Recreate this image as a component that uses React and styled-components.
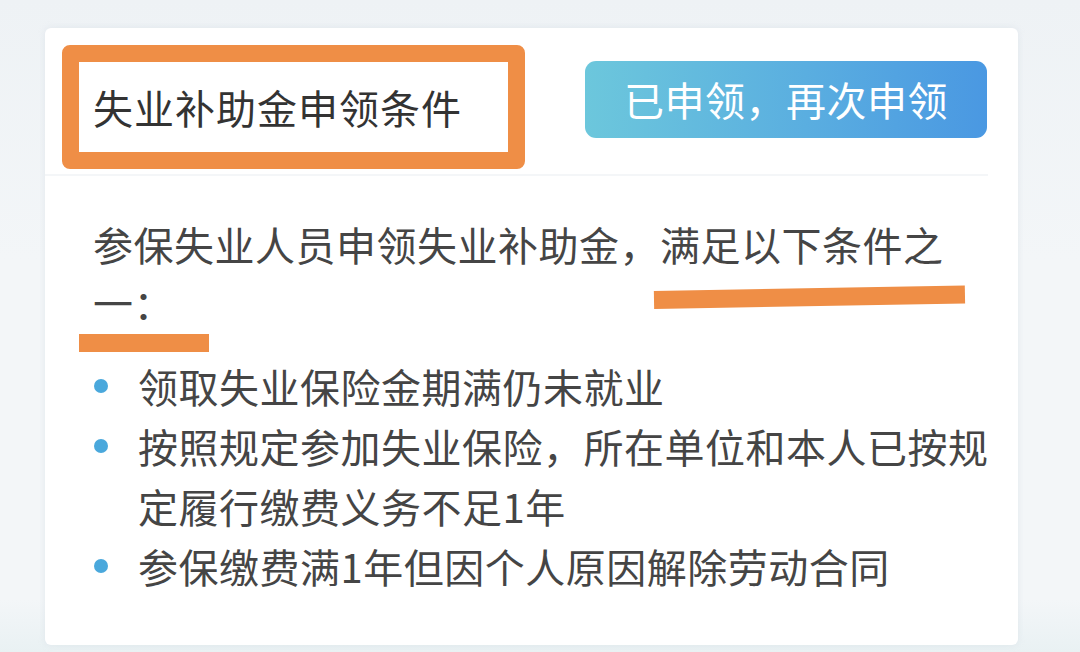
import React from "react";
import styled, { createGlobalStyle } from "styled-components";

const GlobalStyle = createGlobalStyle`
  html, body {
    margin: 0;
    padding: 0;
    background: #eef2f5;
  }
  body {
    font-family: "Noto Sans CJK SC", "Noto Sans", sans-serif;
  }
`;

const Page = styled.div`
  width: 1080px;
  height: 652px;
  overflow: hidden;
  padding: 28px 62px 0 45px;
  box-sizing: border-box;
  background: linear-gradient(180deg, #eef2f5 0%, #f3f6f8 40%, #f3f6f8 92%, #e9f1f3 100%);
`;

const Card = styled.div`
  background: #fff;
  border-radius: 6px;
  height: 617px;
  box-shadow: 0 0 6px rgba(200, 210, 220, 0.35);
`;

const Header = styled.div`
  display: flex;
  align-items: center;
  padding: 12px 0 0 17px;
  height: 148px;
  box-sizing: border-box;
  border-bottom: 2px solid #f4f6f8;
  margin-right: 30px;
`;

const TitleBox = styled.div`
  flex-shrink: 0;
  width: 463px;
  height: 124px;
  box-sizing: border-box;
  border: 17px solid #ef8e46;
  border-radius: 8px;
  display: flex;
  align-items: center;
  padding-left: 14px;
  font-size: 40px;
  letter-spacing: 1px;
  color: #333;
`;

const ApplyButton = styled.button`
  flex-shrink: 0;
  margin-left: 60px;
  margin-top: -16px;
  width: 402px;
  height: 77px;
  border: none;
  border-radius: 11px;
  background: linear-gradient(90deg, #6cc7dc 0%, #5aaee0 55%, #4a98e2 100%);
  color: #fff;
  font-family: inherit;
  font-size: 40px;
  letter-spacing: 0.5px;
  cursor: pointer;
`;

const Body = styled.div`
  padding: 39px 20px 0 48px;
  color: #454545;
  font-size: 40px;
  letter-spacing: 0.5px;
`;

const Intro = styled.p`
  margin: 0;
  max-width: 872px;
  line-height: 58px;
`;

const Marked = styled.span`
  position: relative;

  &::after {
    content: "";
    position: absolute;
    left: ${(p) => p.$left}px;
    width: ${(p) => p.$width}px;
    top: ${(p) => p.$top}px;
    height: 18px;
    background: #ef8e46;
    transform: rotate(${(p) => p.$tilt}deg);
    transform-origin: left center;
  }
`;

const List = styled.ul`
  list-style: none;
  margin: 25px 0 0 0;
  padding: 0;
`;

const Item = styled.li`
  position: relative;
  padding-left: 45px;
  line-height: 60px;

  &::before {
    content: "";
    position: absolute;
    left: 1px;
    top: 23px;
    width: 14px;
    height: 14px;
    border-radius: 50%;
    background: #4aa8dc;
  }
`;

const items = [
  "领取失业保险金期满仍未就业",
  "按照规定参加失业保险，所在单位和本人已按规定履行缴费义务不足1年",
  "参保缴费满1年但因个人原因解除劳动合同",
];

export default function App() {
  return (
    <>
      <GlobalStyle />
      <Page>
        <Card>
          <Header>
            <TitleBox>失业补助金申领条件</TitleBox>
            <ApplyButton>已申领，再次申领</ApplyButton>
          </Header>
          <Body>
            <Intro>
              参保失业人员申领失业补助金，
              <Marked $left={-6} $width={311} $top={76} $tilt={-1}>
                满足以下条件之
              </Marked>
              <Marked $left={-14} $width={130} $top={61} $tilt={0}>
                一：
              </Marked>
            </Intro>
            <List>
              {items.map((t) => (
                <Item key={t}>{t}</Item>
              ))}
            </List>
          </Body>
        </Card>
      </Page>
    </>
  );
}
